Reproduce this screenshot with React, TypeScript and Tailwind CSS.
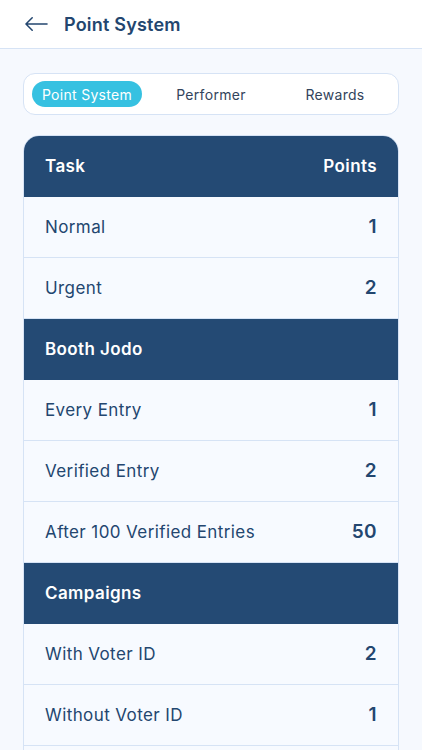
type Row = { label: string; points?: number; section?: boolean };

const rows: Row[] = [
  { label: "Normal", points: 1 },
  { label: "Urgent", points: 2 },
  { label: "Booth Jodo", section: true },
  { label: "Every Entry", points: 1 },
  { label: "Verified Entry", points: 2 },
  { label: "After 100 Verified Entries", points: 50 },
  { label: "Campaigns", section: true },
  { label: "With Voter ID", points: 2 },
  { label: "Without Voter ID", points: 1 },
];

export default function App() {
  return (
    <div
      className="flex h-[750px] flex-col overflow-hidden bg-[#f6f9fe] text-[#23466f]"
      style={{ fontFamily: "Inter, 'Noto Sans', sans-serif" }}
    >
      <header className="flex h-[49px] shrink-0 items-center gap-4 border-b border-[#d6e3f5] bg-white pl-[25px]">
        <svg aria-hidden="true" viewBox="0 0 24 16" className="h-[16px] w-[23px]" fill="none" stroke="#23466f" strokeWidth={1.6} strokeLinecap="round" strokeLinejoin="round">
          <path d="M1 8h22M7.5 1.5 1 8l6.5 6.5" />
        </svg>
        <h1 className="text-[18px] font-semibold tracking-[0.2px]">Point System</h1>
      </header>

      <main className="flex flex-col gap-5 px-[23px] pt-6">
        <nav className="flex h-[42px] items-center rounded-xl border border-[#d6e3f5] bg-white px-2 text-[14px] tracking-[0.3px]">
          <button className="h-[26px] w-[110px] rounded-full bg-[#36c1e1] text-white">
            Point System
          </button>
          <button className="w-[138px] text-center text-[#33445c]">Performer</button>
          <button className="flex-1 text-center text-[#33445c]">Rewards</button>
        </nav>

        <section className="overflow-hidden rounded-t-2xl border border-[#d6e3f5] bg-[#f7faff] tracking-[0.4px]">
          <div className="flex h-[61px] items-center justify-between bg-[#244a74] px-[21px] pt-px text-[17px] font-semibold text-white">
            <span>Task</span>
            <span>Points</span>
          </div>
          {rows.map((row) =>
            row.section ? (
              <div
                key={row.label}
                className="flex h-[61px] items-center bg-[#244a74] px-[21px] pt-px text-[17px] font-semibold text-white"
              >
                {row.label}
              </div>
            ) : (
              <div
                key={row.label}
                className="flex h-[61px] items-center justify-between border-b border-[#d6e3f5] px-[21px] pt-px text-[17px]"
              >
                <span>{row.label}</span>
                <span className="text-[19px] font-semibold">{row.points}</span>
              </div>
            ),
          )}
          <div className="h-[61px]" />
        </section>
      </main>
    </div>
  );
}
